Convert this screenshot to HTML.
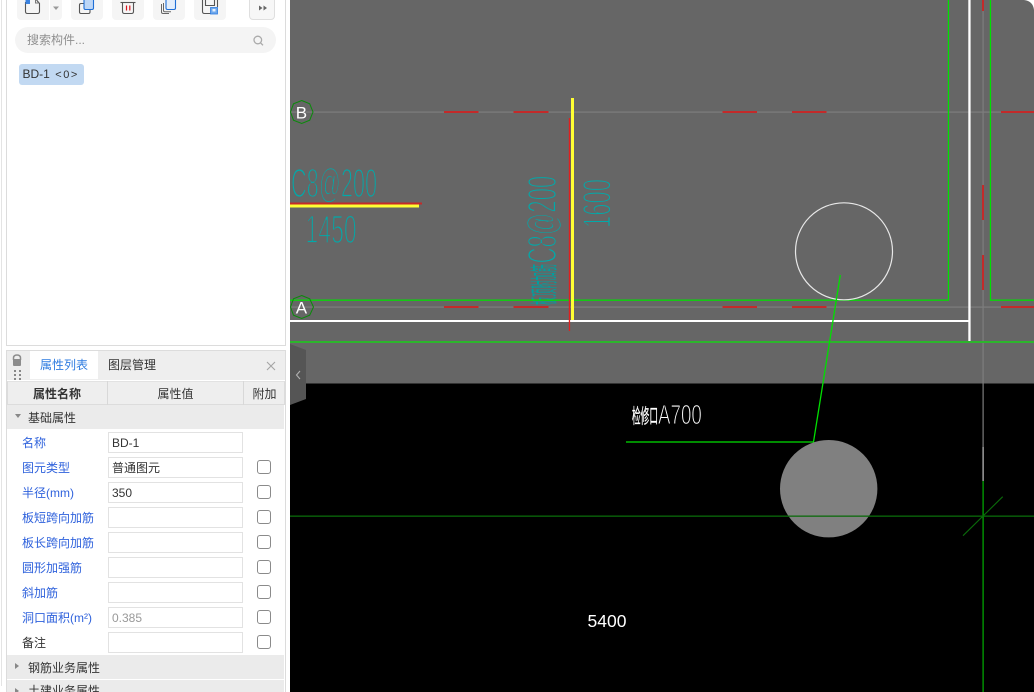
<!DOCTYPE html>
<html style="overflow:hidden;height:692px"><head><meta charset="utf-8"><style>
html,body{margin:0;padding:0;background:#fff}
body{width:1034px;height:692px;position:relative;overflow:hidden;font-family:"Liberation Sans","Noto Sans CJK SC",sans-serif;font-size:12px;color:#333}
#w{position:absolute;left:0;top:0;width:1034px;height:692px;overflow:hidden}
.a{position:absolute;box-sizing:border-box}
.btn{background:#f5f5f5;border-radius:0 0 4px 4px;top:-5px;height:25px}
.lab{position:absolute;left:22px;color:#2f62dc;line-height:23px;white-space:nowrap}
.inp{position:absolute;left:108px;width:135px;height:21px;border:1px solid #e2e2e2;background:#fff;line-height:20px;padding-left:3px;box-sizing:border-box;color:#333}
.cb{position:absolute;left:257px;width:14px;height:14px;border:1px solid #8a8a8a;border-radius:3px;box-sizing:border-box;background:#fff}
.sec{position:absolute;left:7px;width:277px;background:#ebebeb;padding-left:21px;box-sizing:border-box;color:#333;white-space:nowrap}
.tri{position:absolute;left:8px;top:8px;width:0;height:0;border-top:3px solid transparent;border-bottom:3px solid transparent;border-left:4px solid #888}
.trd{position:absolute;left:8px;top:9px;width:0;height:0;border-left:3px solid transparent;border-right:3px solid transparent;border-top:4px solid #888}
svg text{white-space:pre}
</style></head><body><div id="w">

<!-- panel frames -->
<div class="a" style="left:1px;top:0;width:1px;height:686px;background:#e4e4e4"></div>
<div class="a" style="left:6px;top:-2px;width:280px;height:348px;border:1px solid #dcdcdc;background:#fff"></div>

<!-- toolbar -->
<div class="a btn" style="left:17px;width:32px;border-radius:0 0 0 4px"></div>
<div class="a btn" style="left:50px;width:12px;border-radius:0 0 4px 0"></div>
<div class="a btn" style="left:71px;width:32px"></div>
<div class="a btn" style="left:112px;width:32px"></div>
<div class="a btn" style="left:153px;width:32px"></div>
<div class="a btn" style="left:194px;width:32px"></div>
<div class="a btn" style="left:249px;width:26px;border:1px solid #dfdfdf;background:#f7f7f7"></div>

<div class="a" style="left:15px;top:27px;width:261px;height:26px;border-radius:13px;background:#f4f4f4;color:#8f8f8f;line-height:26px;padding-left:12px">搜索构件...</div>
<div class="a" style="left:19px;top:64px;width:65px;height:21px;border-radius:3px;background:#c2d9f2;line-height:21px;padding-left:3.5px;color:#333;white-space:nowrap">BD-1 <span style="font-size:11px;margin-left:2px;letter-spacing:1.6px">&lt;0&gt;</span></div>

<svg class="a" style="left:0;top:0" width="290" height="60" fill="none">
 <!-- new -->
 <path d="M25.5 2V11.5Q25.5 13.5 27.5 13.5H37.5Q39.5 13.5 39.5 11.5V3.5L36.5 0" stroke="#555" stroke-width="1.1"/>
 <path d="M35.5 -1V3H39" stroke="#777"/>
 <rect x="25.5" y="0" width="4.5" height="4" fill="#3b82e0"/>
 <path d="M53 6.5h6l-3 3.5z" fill="#999"/>
 <!-- copy -->
 <rect x="79.5" y="3.5" width="10.5" height="10" rx="1.5" stroke="#555" stroke-width="1.1"/>
 <rect x="84" y="-3" width="9.5" height="12.5" rx="1.5" fill="#bcd6f6" stroke="#1f6fd6" stroke-width="1.1"/>
 <!-- delete -->
 <path d="M122.5 3V11.5Q122.5 13.5 124.5 13.5H131.5Q133.5 13.5 133.5 11.5V3" stroke="#555" stroke-width="1.1"/>
 <path d="M120.5 2.5H135.5" stroke="#555" stroke-width="1.1"/>
 <path d="M126.5 5.5V10.5M129.8 5.5V10.5" stroke="#d8131b" stroke-width="1.2"/>
 <!-- multi copy -->
 <path d="M161.5 4V12Q161.5 13.5 163 13.5H169" stroke="#666" stroke-width="1"/>
 <path d="M163.5 3V10.5Q163.5 11.8 165 11.8H171" stroke="#666" stroke-width="1"/>
 <rect x="166" y="-3" width="9.5" height="12.5" rx="1.5" fill="#e3eefc" stroke="#1f6fd6" stroke-width="1.1"/>
 <!-- save -->
 <path d="M202.5 -1V11.5Q202.5 13.5 204.5 13.5H211" stroke="#555" stroke-width="1.1"/>
 <path d="M217.5 -1V7" stroke="#555" stroke-width="1.1"/>
 <path d="M205.5 -1V5.5H214.5V-1" stroke="#555" stroke-width="1.1"/>
 <rect x="210.5" y="7.5" width="7" height="6.5" fill="#6ea8ec" stroke="#2f7ce0" stroke-width=".8"/>
 <rect x="212.5" y="9" width="3" height="2.5" fill="#e8f1fc"/>
 <!-- more -->
 <path d="M259 5.5v5l3.5-2.5zM263.5 5.5v5l3.5-2.5z" fill="#666"/>
 <!-- search -->
 <circle cx="257.8" cy="40" r="3.8" stroke="#aaa" stroke-width="1.3"/>
 <path d="M260.7 43l2.3 2.3" stroke="#aaa" stroke-width="1.3"/>
</svg>

<!-- lower panel -->
<div class="a" style="left:6px;top:350px;width:280px;height:350px;border:1px solid #dcdcdc;background:#fff"></div>
<div class="a" style="left:7px;top:351px;width:278px;height:29px;background:#eee"></div>
<div class="a" style="left:30px;top:351px;width:68px;height:28px;background:#fff;color:#2f7ce0;line-height:29px;padding-left:10px">属性列表</div>
<div class="a" style="left:108px;top:351px;line-height:29px;color:#333">图层管理</div>
<svg class="a" style="left:0;top:345px" width="290" height="40" fill="none">
 <path d="M13.5 15V13Q13.5 10 17 10T20.5 13V15" stroke="#8c8c8c" stroke-width="1.5"/>
 <rect x="13" y="14" width="8" height="7" rx="1" fill="#8c8c8c"/>
 <path d="M14 25h2v2h-2zM19 25h2v2h-2zM14 29h2v2h-2zM19 29h2v2h-2zM14 33h2v2h-2zM19 33h2v2h-2z" fill="#888"/>
 <path d="M267 17l8 8M275 17l-8 8" stroke="#a5a5a5" stroke-width="1.1"/>
</svg>
<div class="a" style="left:7px;top:381px;width:278px;height:24px;background:#eee;border:1px solid #dcdcdc;border-top-color:#e2e2e2"></div>
<div class="a" style="left:107px;top:381px;width:1px;height:24px;background:#d8d8d8"></div>
<div class="a" style="left:243px;top:381px;width:1px;height:24px;background:#d8d8d8"></div>
<div class="a" style="left:7px;top:382px;width:100px;text-align:center;line-height:24px;font-weight:bold;color:#333">属性名称</div>
<div class="a" style="left:108px;top:382px;width:135px;text-align:center;line-height:24px;color:#333">属性值</div>
<div class="a" style="left:244px;top:382px;width:41px;text-align:center;line-height:24px;color:#333">附加</div>

<div class="sec" style="top:405px;height:24px;line-height:26px"><span class="trd"></span>基础属性</div>

<div class="lab" style="top:432px">名称</div><div class="inp" style="top:432px">BD-1</div>
<div class="lab" style="top:457px">图元类型</div><div class="inp" style="top:457px">普通图元</div><div class="cb" style="top:460px"></div>
<div class="lab" style="top:482px">半径(mm)</div><div class="inp" style="top:482px">350</div><div class="cb" style="top:485px"></div>
<div class="lab" style="top:507px">板短跨向加筋</div><div class="inp" style="top:507px"></div><div class="cb" style="top:510px"></div>
<div class="lab" style="top:532px">板长跨向加筋</div><div class="inp" style="top:532px"></div><div class="cb" style="top:535px"></div>
<div class="lab" style="top:557px">圆形加强筋</div><div class="inp" style="top:557px"></div><div class="cb" style="top:560px"></div>
<div class="lab" style="top:582px">斜加筋</div><div class="inp" style="top:582px"></div><div class="cb" style="top:585px"></div>
<div class="lab" style="top:607px">洞口面积(m²)</div><div class="inp" style="top:607px;color:#999">0.385</div><div class="cb" style="top:610px"></div>
<div class="lab" style="top:632px;color:#333">备注</div><div class="inp" style="top:632px"></div><div class="cb" style="top:635px"></div>

<div class="sec" style="top:655px;height:24px;line-height:26px"><span class="tri"></span>钢筋业务属性</div>
<div class="sec" style="top:680px;height:24px;line-height:22px"><span class="tri"></span>土建业务属性</div>

<!-- canvas -->
<svg class="a" style="left:0;top:0" width="1034" height="692" font-family="'Liberation Sans','Noto Sans CJK SC',sans-serif">
 <rect x="290" y="0" width="744" height="692" fill="#000"/>
 <rect x="290" y="0" width="744" height="383" fill="#666"/>
 <rect x="290" y="383" width="744" height="1" fill="#333"/>
 <path d="M1024 0H1034V10Q1033 1 1024 0Z" fill="#fff"/>

 <!-- cyan text: thinned by overpainting the stroke in the background colour -->
 <g fill="#00aaaa" stroke="#666" stroke-width="1.8">
  <text transform="translate(291,197) scale(.53,1)" font-size="41">C8@200</text>
  <text transform="translate(305.5,243) scale(.575,1)" font-size="40">1450</text>
  <text transform="translate(610.5,228) rotate(-90) scale(.55,1)" font-size="40">1600</text>
  <text transform="translate(556,263.5) rotate(-90) scale(.54,1)" font-size="41">C8@200</text>
 </g>
 <text transform="translate(554,305) rotate(-90)" font-size="28" textLength="41" lengthAdjust="spacingAndGlyphs" fill="#00a0a0">板顶附加筋</text>

 <!-- grey axis -->
 <g fill="#7d7d7d">
  <rect x="290" y="111.5" width="744" height="1.2"/>
  <rect x="290" y="306.5" width="744" height="1.2"/>
  <rect x="982.5" y="0" width="1.2" height="447"/>
 </g>
 <rect x="982.5" y="447" width="1.2" height="34" fill="#c4c4c4"/>
 <rect x="982.5" y="481" width="1.2" height="211" fill="#00b000"/>
 <!-- red dashes -->
 <g fill="#c32a2a">
  <rect x="444" y="111" width="34.5" height="2"/><rect x="513.5" y="111" width="35" height="2"/>
  <rect x="722.5" y="111" width="34.5" height="2"/><rect x="792" y="111" width="34.5" height="2"/><rect x="1001" y="111" width="33" height="2"/>
  <rect x="444" y="306" width="34.5" height="2"/><rect x="513.5" y="306" width="35" height="2"/>
  <rect x="722.5" y="306" width="34.5" height="2"/><rect x="792" y="306" width="34.5" height="2"/><rect x="1001" y="306" width="33" height="2"/>
  <rect x="982" y="0" width="2" height="11"/><rect x="982" y="185" width="2" height="35"/><rect x="982" y="255" width="2" height="35"/>
 </g>
 <!-- white walls -->
 <rect x="968.3" y="0" width="2.3" height="342" fill="#fff"/>
 <rect x="290" y="320" width="680" height="2" fill="#fff"/>
 <!-- green outlines -->
 <g fill="#00e000">
  <rect x="947.8" y="0" width="1.3" height="300.5"/>
  <rect x="290" y="299.5" width="659" height="1.3"/>
  <rect x="989.8" y="0" width="1.3" height="300.5"/>
  <rect x="990" y="299.5" width="44" height="1.3"/>
 </g>
 <rect x="290" y="341" width="744" height="2" fill="#2cb52c"/>

 <!-- axis bubbles -->
 <polygon points="301.7,100.5 309.7,103.8 313,112 309.7,120.2 301.7,123.5 293.5,120.2 290.5,112 293.5,103.8" fill="none" stroke="#0a8a0a" stroke-width="1"/>
 <polygon points="301.7,295.5 309.7,298.8 313.5,307 309.7,315.2 301.7,318.5 293.5,315.2 290.5,307 293.5,298.8" fill="none" stroke="#0a8a0a" stroke-width="1"/>
 <text x="295.8" y="118.3" font-size="17" fill="#fff">B</text>
 <text x="295.8" y="313.3" font-size="17" fill="#fff">A</text>

 <!-- rebars -->
 <rect x="571" y="98" width="3" height="222" fill="#ffff33"/>
 <rect x="568.8" y="118" width="1.3" height="213" fill="#e02020"/>
 <rect x="290" y="202.5" width="132" height="2" fill="#c32a2a"/>
 <rect x="290" y="204.5" width="129" height="3" fill="#ffff33"/>

 <!-- opening -->
 <circle cx="844" cy="251.3" r="48.5" fill="none" stroke="#e8e8e8" stroke-width="1.2"/>
 <path d="M840.3 275L813.5 442H626" fill="none" stroke="#00e000" stroke-width="1.3"/>
 <circle cx="828.7" cy="488.7" r="48.7" fill="#808080"/>
 <rect x="290" y="515.5" width="744" height="1.3" fill="#0a6a0a"/>
 <path d="M963 535.7L1002.7 496.7" stroke="#0a6a0a" stroke-width="1.1" fill="none"/>

 <text x="632" y="423" font-size="20" textLength="26" lengthAdjust="spacingAndGlyphs" fill="#fff" stroke="#fff" stroke-width=".3">检修口</text>
 <text transform="translate(658,424) scale(.67,1)" font-size="28" fill="#fff" stroke="#000" stroke-width="1">A700</text>
 <text x="587.5" y="627" font-size="17.5" fill="#fff">5400</text>

 <!-- collapse handle -->
 <path d="M290 344L306 350V399L290 405Z" fill="#555"/>
 <path d="M300 371l-3.5 4 3.5 4" fill="none" stroke="#b0b0b0" stroke-width="1.1"/>
</svg>
</div></body></html>
